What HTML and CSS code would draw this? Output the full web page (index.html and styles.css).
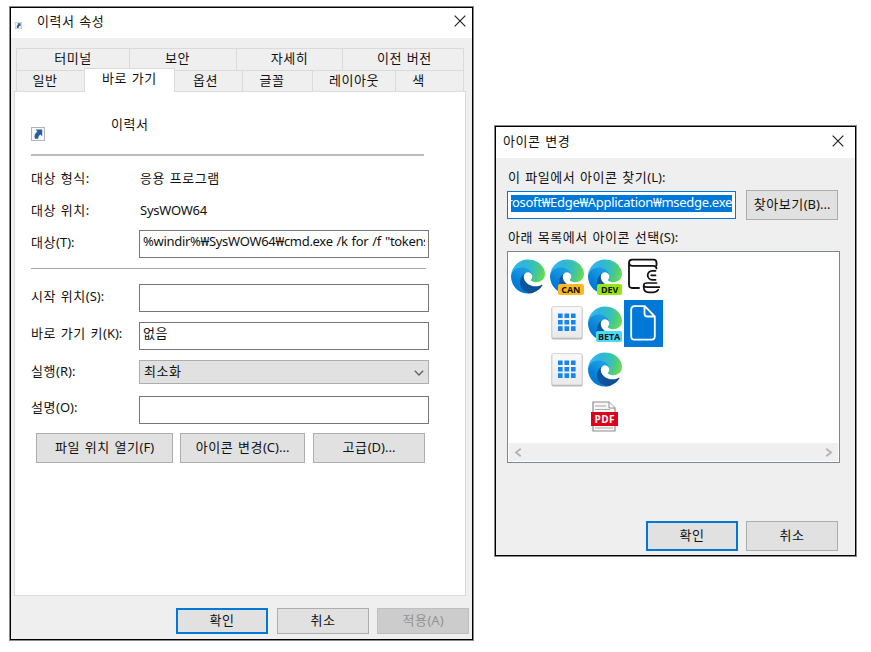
FILE: index.html
```
<!DOCTYPE html>
<html lang="ko">
<head>
<meta charset="utf-8">
<title>이력서 속성</title>
<link rel="stylesheet" href="styles.css">
</head>
<body>
<svg class="defs" aria-hidden="true">
  <defs>
    <linearGradient id="deep" x1="60" y1="177" x2="241" y2="177" gradientUnits="userSpaceOnUse"><stop offset="0" stop-color="#0c59a4"/><stop offset="1" stop-color="#114a8b"/></linearGradient>
    <linearGradient id="mid" x1="150" y1="95" x2="45" y2="230" gradientUnits="userSpaceOnUse"><stop offset="0" stop-color="#1b9de2"/><stop offset=".3" stop-color="#1595df"/><stop offset=".7" stop-color="#0680d7"/><stop offset="1" stop-color="#0078d4"/></linearGradient>
    <radialGradient id="wave" cx="30" cy="50" r="235" gradientUnits="userSpaceOnUse"><stop offset="0" stop-color="#35b8f1"/><stop offset=".3" stop-color="#2fb4dc"/><stop offset=".62" stop-color="#36c1b8"/><stop offset=".82" stop-color="#4fcb80"/><stop offset="1" stop-color="#66dd4e"/></radialGradient>
    <linearGradient id="tile" x1="0" y1="0" x2="0" y2="1"><stop offset="0" stop-color="#f9f9f9"/><stop offset="1" stop-color="#e9e9e9"/></linearGradient>
    <symbol id="edge" viewBox="0 0 256 256">
      <g transform="translate(-4.63 -4.92)">
        <path fill="url(#deep)" d="M235.68 195.46a93.73 93.73 0 0 1-10.54 4.71 101.87 101.87 0 0 1-35.9 6.46c-47.32 0-88.54-32.55-88.54-74.32A31.48 31.48 0 0 1 117.13 105c-42.8 1.8-53.8 46.4-53.8 72.53 0 73.88 68.09 81.37 82.76 81.37 7.91 0 19.84-2.3 27-4.56l1.31-.44a128.34 128.34 0 0 0 66.6-52.8 4 4 0 0 0-5.32-5.64Z"/>
        <path fill="url(#mid)" d="M110.34 246.34A79.2 79.2 0 0 1 87.6 225a80.72 80.72 0 0 1 29.53-120c3.12-1.47 8.45-4.13 15.54-4a32.35 32.35 0 0 1 25.69 13 31.88 31.88 0 0 1 6.36 18.66c0-.21 24.46-79.6-80-79.6-43.9 0-80 41.66-80 78.21a130.15 130.15 0 0 0 12.11 56 128 128 0 0 0 156.38 67.11 75.55 75.55 0 0 1-62.78-8Z"/>
        <path fill="url(#wave)" d="M156.94 153.75c-.81 1.05-3.3 2.5-3.3 5.66 0 2.61 1.7 5.12 4.72 7.23 14.38 10 41.49 8.68 41.56 8.68a59.56 59.56 0 0 0 30.27-8.35 61.38 61.38 0 0 0 30.43-52.88c.26-22.41-8-37.31-11.34-43.91C228.1 28.76 182.35 4.92 132.61 4.92a128 128 0 0 0-128 126.2c.48-36.54 36.8-66.05 80-66.05 3.5 0 23.46.34 42 10.07 16.34 8.58 24.9 18.94 30.85 29.21 6.18 10.67 7.28 24.15 7.28 29.52s-2.74 13.33-7.8 19.88Z"/>
      </g>
    </symbol>
    <symbol id="apps" viewBox="0 0 32 34">
      <rect x=".5" y="1" width="31" height="32.5" rx="1.8" fill="#b5b5b5"/>
      <rect x=".9" y=".6" width="30.2" height="31.4" rx="1.5" fill="url(#tile)" stroke="#c9c9c9" stroke-width=".8"/>
      <path fill="#1486ee" d="M7 7.5h4.6v4.6H7zM13.5 7.5h4.6v4.6h-4.6zM20 7.5h4.6v4.6H20zM7 13.9h4.6v4.6H7zM13.5 13.9h4.6v4.6h-4.6zM20 13.9h4.6v4.6H20zM7 20.3h4.6v4.6H7zM13.5 20.3h4.6v4.6h-4.6zM20 20.3h4.6v4.6H20z"/>
    </symbol>
    <symbol id="shortcut" viewBox="0 0 14 14">
      <rect x=".5" y=".5" width="13" height="13" fill="#f7f8f9" stroke="#aeb4ba"/>
      <path fill="#2c5d9e" d="M4.6 2.4h6.6v6.8L9.4 7.6C7.6 8.8 7.2 10 7.3 11.8H3.9C2.9 9.2 3.8 6.4 6.4 4.6z"/>
    </symbol>
    <symbol id="close" viewBox="0 0 12 12"><path d="M.7.7l10.6 10.6M11.3.7L.7 11.3" fill="none" stroke="#222" stroke-width="1.2"/></symbol>
  </defs>
</svg>

<section class="window props">
  <header class="titlebar">
    <svg class="mini"><use href="#shortcut"/></svg>
    <h1>이력서 속성</h1>
    <svg class="close"><use href="#close"/></svg>
  </header>
  <div class="tabs back"><span>터미널</span><span>보안</span><span>자세히</span><span>이전 버전</span></div>
  <div class="tabs front"><span>일반</span><span class="active">바로 가기</span><span>옵션</span><span>글꼴</span><span>레이아웃</span><span>색</span></div>
  <main class="panel">
    <div class="name"><svg><use href="#shortcut"/></svg><span>이력서</span></div>
    <hr>
    <div class="row info"><label>대상 형식:</label><span>응용 프로그램</span></div>
    <div class="row info"><label>대상 위치:</label><span class="latin">SysWOW64</span></div>
    <div class="row target"><label>대상<i>(T):</i></label><div class="field"><span class="latin path">%windir%₩SysWOW64₩cmd.exe /k for /f "tokens</span></div></div>
    <hr class="second">
    <div class="row start"><label>시작 위치<i>(S):</i></label><div class="field"></div></div>
    <div class="row key"><label>바로 가기 키<i>(K):</i></label><div class="field">없음</div></div>
    <div class="row run"><label>실행<i>(R):</i></label><div class="select"><span>최소화</span><svg viewBox="0 0 10 6"><path d="M.8.8L5 5 9.2.8" fill="none" stroke="#606060" stroke-width="1.3"/></svg></div></div>
    <div class="row desc"><label>설명<i>(O):</i></label><div class="field"></div></div>
    <div class="actions"><button class="open">파일 위치 열기<i>(F)</i></button><button class="icon">아이콘 변경<i>(C)...</i></button><button class="more">고급<i>(D)...</i></button></div>
  </main>
  <footer><button class="primary">확인</button><button>취소</button><button class="off">적용<i>(A)</i></button></footer>
</section>

<section class="window change">
  <header class="titlebar"><h1>아이콘 변경</h1><svg class="close"><use href="#close"/></svg></header>
  <p class="find">이 파일에서 아이콘 찾기<i>(L):</i></p>
  <div class="browse">
    <div class="filebox"><span class="latin">rosoft₩Edge₩Application₩msedge.exe</span></div>
    <button>찾아보기<i>(B)...</i></button>
  </div>
  <p class="pick">아래 목록에서 아이콘 선택<i>(S):</i></p>
  <div class="list">
    <div class="grid">
      <div><svg class="edge"><use href="#edge"/></svg></div>
      <div><svg class="edge"><use href="#edge"/></svg><b class="can">CAN</b></div>
      <div><svg class="edge"><use href="#edge"/></svg><b class="dev">DEV</b></div>
      <div><svg class="wallet" viewBox="0 0 34 36" fill="none" stroke="#111" stroke-width="1.8" stroke-linecap="round"><path d="M29.5 7.3V4.6Q29.5 1.6 26.5 1.6H5Q2 1.6 2 5v21.5Q2 30 5.2 30h6.8M2 5q.3 2.8 3.4 2.8h20.8q3.3 0 3.3 2.6"/><path d="M28.5 12.8h-3.3a4.5 4.5 0 0 0 0 9h3.3M24.2 17.3h4.3"/><path d="M29.5 25H20.3q-3.6 0-3.6 2.1t3.6 2.1H32.3M16.7 27.5v1.2q0 5.6 5 5.6h4.6q3.6 0 5-2.6" stroke-width="1.7"/></svg></div>
      <div></div>
      <div><svg class="apps"><use href="#apps"/></svg></div>
      <div><svg class="edge"><use href="#edge"/></svg><b class="beta">BETA</b></div>
      <div class="selected"><svg class="doc" viewBox="0 0 26 36" fill="none" stroke="#fff" stroke-width="1.8" stroke-linejoin="round"><path d="M4.5 1.2h10.3L24.8 11.5v19.8q0 3.4-3.4 3.4H4.5q-3.3 0-3.3-3.4V4.6q0-3.4 3.3-3.4zM14.5 1.5v7q0 3 3 3h7"/></svg></div>
      <div></div>
      <div><svg class="apps"><use href="#apps"/></svg></div>
      <div><svg class="edge"><use href="#edge"/></svg></div>
      <div></div>
      <div></div>
      <div></div>
      <div class="pdfcell"><svg class="sheet" viewBox="0 0 24 31"><path d="M1 1h16l6 6v23H1z" fill="#f7f7f7" stroke="#8d8d8d" stroke-width="1.2"/><path d="M17 1v6h6" fill="#fff" stroke="#8d8d8d"/><path d="M3 5h11M3 8.5h15M3 27h18" stroke="#aaa" stroke-width="1.1"/></svg><b class="pdf">PDF</b></div>
      <div></div>
    </div>
    <div class="scroll">
      <svg viewBox="0 0 8 9"><path d="M6.8.8L2 4.5l4.8 3.7" fill="none" stroke="#b5b5b5" stroke-width="1.9"/></svg>
      <svg viewBox="0 0 8 9"><path d="M1.2.8L6 4.5 1.2 8.2" fill="none" stroke="#b5b5b5" stroke-width="1.9"/></svg>
    </div>
  </div>
  <footer><button class="primary">확인</button><button>취소</button></footer>
</section>
</body>
</html>
```
FILE: styles.css
```
* { box-sizing: border-box; }
body {
  margin: 0;
  height: 652px;
  position: relative;
  overflow: hidden;
  background: #fff;
  color: #111;
  font: 13px/18px "Noto Sans", "Noto Sans CJK KR", sans-serif;
  letter-spacing: 0.55px;
  word-spacing: 0.8px;
}
.defs { position: absolute; width: 0; height: 0; }
svg { display: block; flex: none; }
h1, p { margin: 0; font: inherit; }
i { font-style: normal; letter-spacing: 0; }
.latin { letter-spacing: -0.25px; white-space: nowrap; }

.window {
  position: absolute;
  background: #efefef;
  border: 1px solid #000;
  box-shadow: 0 0 0 1px #8a8a8a;
}
.props { left: 10px; top: 7px; width: 463px; height: 633px; }
.change { left: 495px; top: 126px; width: 361px; height: 430px; }

.titlebar { display: flex; height: 30px; background: #fff; }
.titlebar h1 { flex: 1; }
.props .titlebar h1 { padding: 4px 0 0 15px; }
.mini { width: 7px; height: 7px; margin: 14px 0 0 4px; }
.close { width: 12px; height: 12px; margin: 7px 6px 0 0; }
.change .titlebar { height: 31px; }
.change .titlebar h1 { padding: 5px 0 0 7px; }
.change .close { margin: 8px 11px 0 0; }

.tabs { display: grid; width: 448px; margin-left: 5px; text-align: center; border-left: 1px solid #dadada; }
.tabs span { border-top: 1px solid #dadada; border-right: 1px solid #dadada; }
.back { margin-top: 10px; height: 22px; grid-template-columns: 113px 107px 106px 121px; line-height: 19px; }
.back span:nth-child(4) { padding-left: 3px; }
.back span:nth-child(2) { padding-right: 11px; }
.front { height: 21px; grid-template-columns: 68px 90px 68px 70px 83px 68px; line-height: 19px; }
.front span { padding-right: 6px; }
.front span:nth-child(1), .front span:nth-child(4) { padding-right: 11px; }
.front span:nth-child(5) { padding-right: 0; }
.front span:nth-child(6) { padding-right: 22px; }
.front .active { margin: -2px 0 -1px -1px; background: #fff; border-left: 1px solid #dadada; line-height: 18px; padding: 0; z-index: 1; }

.panel {
  width: 452px;
  height: 505px;
  margin-left: 3px;
  padding: 23px 0 0 16px;
  background: #fff;
  border: 1px solid #dadada;
}
.name { display: flex; height: 39px; }
.name svg { width: 14px; height: 14px; margin-top: 12px; }
.name span { margin-left: 66px; }
hr { width: 393px; height: 2px; margin: 0; border: 0; background: #bcbcbc; }
.row { display: flex; }
.row label { width: 108px; flex: none; white-space: nowrap; }
.info { padding-top: 13px; box-sizing: content-box; height: 19px; }
.info span { padding-left: 1px; }
.field { width: 290px; height: 28px; padding: 1px 3px; border: 1px solid #777; overflow: hidden; }
.path { display: block; overflow: hidden; letter-spacing: -0.3px; }
.target { margin-top: 10px; }
.target label { padding-top: 3px; }
.second { width: 395px; height: 1px; margin-top: 10px; background: #a5a5a5; }
.start { margin-top: 15px; }
.start label { padding-top: 3px; }
.key { margin-top: 10px; }
.key label { padding-top: 2px; }
.run { margin-top: 10px; }
.run label { padding-top: 2px; }
.select { display: flex; justify-content: space-between; width: 290px; height: 24px; padding: 1px 4px; border: 1px solid #adadad; background: #e1e1e1; }
.select svg { width: 10px; height: 6px; margin-top: 8px; }
.desc { margin-top: 12px; }
.desc label { padding-top: 2px; }

button {
  height: 30px;
  padding: 0 0 3px;
  background: #e1e1e1;
  border: 1px solid #adadad;
  color: inherit;
  font: inherit;
  letter-spacing: inherit;
  word-spacing: inherit;
  white-space: nowrap;
}
.actions { display: flex; margin: 9px 0 0 5px; }
.open { width: 137px; }
.icon { width: 125px; margin-left: 7px; }
.more { width: 112px; margin-left: 8px; }
footer { display: flex; gap: 9px; }
footer button { width: 92px; }
.primary { border: 2px solid #0078d7; }
.props footer { margin: 12px 0 0 165px; }
.props footer button { height: 26px; }
.props .off { margin-left: -1px; background: #ccc; border-color: #bfbfbf; color: #929292; }

.find { padding: 10px 0 0 12px; }
.browse { display: flex; align-items: center; gap: 10px; margin: 4px 0 0 11px; }
.browse button { width: 92px; padding-bottom: 2px; }
.filebox { width: 229px; height: 28px; padding: 3px 3px; background: #fff; border: 1px solid #0078d7; overflow: hidden; }
.filebox span { display: flex; justify-content: flex-end; height: 17px; line-height: 15px; letter-spacing: -0.3px; background: #0078d7; color: #fff; overflow: hidden; }
.pick { padding: 8px 0 0 12px; }
.list { width: 333px; height: 212px; margin: 5px 0 0 11px; padding: 1px; background: #fff; border: 1px solid #7f858c; }
.grid { display: grid; height: 190px; grid-template-columns: repeat(4, 38.4px); grid-template-rows: repeat(4, 46.8px); align-content: start; }
.grid > div { display: flex; justify-content: center; align-items: center; position: relative; }
.edge { width: 34px; height: 35px; }
.grid b {
  position: absolute;
  right: 2px;
  bottom: 5px;
  height: 11px;
  border-radius: 2px;
  font: 700 9px/11px "Open Sans", sans-serif;
  letter-spacing: -0.1px;
  word-spacing: 0;
  text-align: center;
}
.grid .can { width: 26px; background: #fdb924; }
.grid .dev { width: 25px; background: #94e60c; }
.grid .beta { width: 26px; background: #47dcf8; }
.wallet { width: 34px; height: 36px; margin-left: 2px; }
.apps { width: 32px; height: 34px; }
.selected { background: #0078d7; }
.doc { width: 26px; height: 36px; }
.sheet { width: 24px; height: 31px; margin-right: 1px; }
.grid .pdf { width: 27px; height: 14px; right: 6px; bottom: 14px; background: #e1001a; border-radius: 0; color: #fff; font-size: 10px; line-height: 14px; letter-spacing: 0.4px; }
.scroll { display: flex; justify-content: space-between; align-items: center; height: 18px; padding: 0 5px; background: #efefef; }
.scroll svg { width: 8px; height: 9px; }
.change footer { margin: 58px 0 0 150px; gap: 8px; }
```
